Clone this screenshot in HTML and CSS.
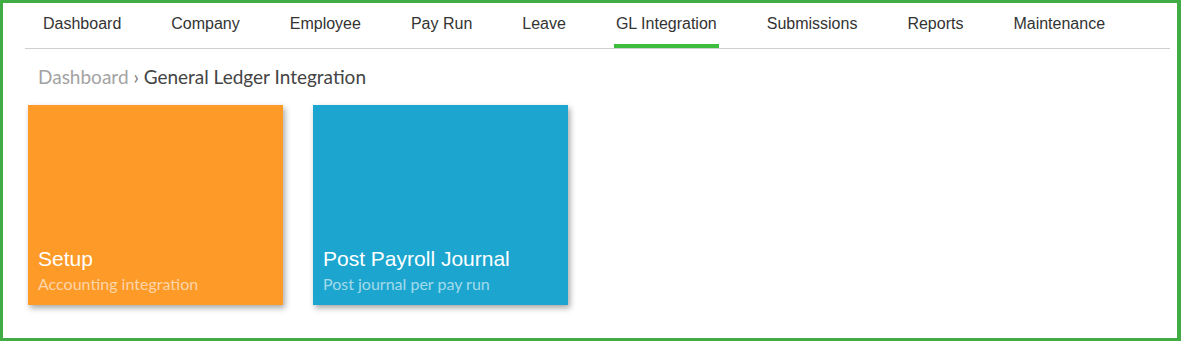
FILE: index.html
```html
<!DOCTYPE html>
<html lang="en">
<head>
    <meta charset="UTF-8">
    <title>General Ledger Integration</title>
    <link rel="stylesheet" href="styles.css">
</head>
<body>
    <div class="frame">
        <!-- Main navigation -->
        <nav class="tabs">
            <a class="tab" href="#">Dashboard</a>
            <a class="tab" href="#">Company</a>
            <a class="tab" href="#">Employee</a>
            <a class="tab" href="#">Pay Run</a>
            <a class="tab" href="#">Leave</a>
            <a class="tab active" href="#">GL Integration</a>
            <a class="tab" href="#">Submissions</a>
            <a class="tab" href="#">Reports</a>
            <a class="tab" href="#">Maintenance</a>
        </nav>

        <div class="breadcrumb">
            <a href="#">Dashboard</a> <span class="sep">&rsaquo;</span> General Ledger Integration
        </div>

        <!-- Tiles -->
        <div class="tiles">
            <a class="tile tile-orange" href="#">
                <span class="tile-title">Setup</span>
                <span class="tile-sub">Accounting integration</span>
            </a>
            <a class="tile tile-blue" href="#">
                <span class="tile-title">Post Payroll Journal</span>
                <span class="tile-sub">Post journal per pay run</span>
            </a>
        </div>
    </div>
</body>
</html>
```

FILE: styles.css
```css
/* Page */
body {
    margin: 0;
    padding: 0;
    background: #fff;
    font-family: "Liberation Sans", Arial, sans-serif;
    color: #333;
}

.frame {
    height: 341px;
    box-sizing: border-box;
    border: 3px solid #42ac44;
    border-right-width: 4px;
    padding: 0 7px 0 22px;
}

/* Tabs */
.tabs {
    display: flex;
    gap: 46px;
    padding-left: 16px;
    border-bottom: 1px solid #cfcfcf;
}

.tab {
    display: block;
    padding: 11px 2px 10px;
    font-size: 16px;
    line-height: 20px;
    color: #333;
    text-decoration: none;
    border-bottom: 4px solid transparent;
}

.tab.active {
    border-bottom-color: #3dbd3d;
}

/* Breadcrumb */
.breadcrumb {
    margin: 16px 0 0 13px;
    font-family: Lato, "Noto Sans", sans-serif;
    font-size: 19px;
    line-height: 24px;
    color: #444;
}

.breadcrumb a {
    color: #a3a3a3;
    text-decoration: none;
}

.breadcrumb .sep {
    color: #777;
}

/* Tiles */
.tiles {
    display: flex;
    gap: 30px;
    margin: 16px 0 0 3px;
}

.tile {
    width: 255px;
    height: 200px;
    box-sizing: border-box;
    padding: 0 10px 11px;
    display: flex;
    flex-direction: column;
    justify-content: flex-end;
    text-decoration: none;
    box-shadow: 2px 3px 6px rgba(0, 0, 0, 0.35);
}

.tile-orange {
    background: #fd9a28;
}

.tile-blue {
    background: #1ca6cf;
}

.tile-title {
    font-size: 21px;
    line-height: 24px;
    color: #fff;
}

.tile-sub {
    font-family: Lato, "Noto Sans", sans-serif;
    font-size: 16px;
    line-height: 20px;
    margin-top: 3px;
    color: rgba(255, 255, 255, 0.6);
}
```
